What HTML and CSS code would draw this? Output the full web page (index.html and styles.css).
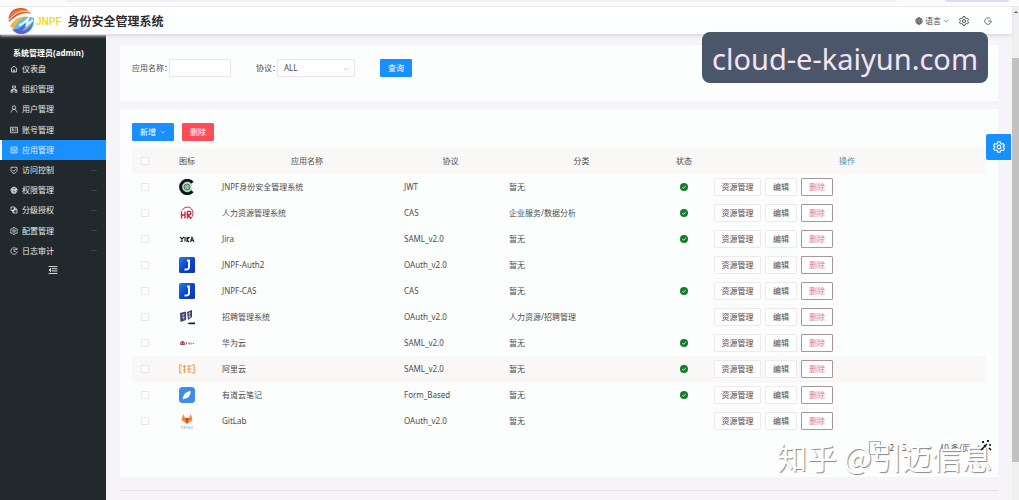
FILE: index.html
```html
<!DOCTYPE html>
<html lang="zh-CN">
<head>
<meta charset="utf-8">
<title>JNPF 身份安全管理系统</title>
<link rel="stylesheet" href="styles.css">
</head>
<body>
<svg class="defs" aria-hidden="true">
  <symbol id="i-home" viewBox="0 0 16 16"><path d="M1.500 8 8 2l6.500 6M3 7v7h10V7M6.500 14v-4h3v4"/></symbol>
  <symbol id="i-org" viewBox="0 0 16 16"><path d="M5 2h6v4H5zM8 6v3M3.500 12V9h9v3M2 11h4v3.500H2zM10 11h4v3.500h-4z"/></symbol>
  <symbol id="i-user" viewBox="0 0 16 16"><circle cx="8" cy="5" r="3.500"/><path d="M2 15c.5-8 11.500-8 12 0"/></symbol>
  <symbol id="i-card" viewBox="0 0 16 16"><path d="M1 2.500h14v11H1zM3.500 11c0-3 4-3 4 0M9.500 6h3.500M9.500 9.500h3.500"/><circle cx="5.500" cy="6.500" r="1.500"/></symbol>
  <symbol id="i-app" viewBox="0 0 16 16"><path d="M2 2h12v12H2zM2 6h12M6 6v8M8.500 9h3M8.500 11.500h3"/></symbol>
  <symbol id="i-shield" viewBox="0 0 16 16"><path d="M2 2.500h12V9c0 3-3 4.500-6 6-3-1.500-6-3-6-6zM5 8l2.500 2.500L11.500 6"/></symbol>
  <symbol id="i-bank" viewBox="0 0 16 16"><path d="M1.500 7 8 2l6.500 5zM3 9.500h10M5 7v6M8 4v10M11 7v6M4 14h8"/><circle cx="8" cy="8.500" r="6"/></symbol>
  <symbol id="i-copy" viewBox="0 0 16 16"><path d="M2 2h7v7H2zM6.500 6.500H14V14H6.500zM5 9v3h4M9 4h3v5"/></symbol>
  <symbol id="i-gear" viewBox="0 0 16 16"><path d="M6.500 1h3l.6 2.200 1.500.9 2.200-.6 1.500 2.600L13.700 7.700v.8l1.600 1.500-1.500 2.600-2.200-.6-1.500.9L9.500 15h-3l-.6-2.100-1.500-.9-2.200.6L.7 10l1.600-1.500v-.8L.7 6.100l1.500-2.600 2.200.6 1.500-.9z"/><circle cx="8" cy="8" r="2.500"/></symbol>
  <symbol id="i-clock" viewBox="0 0 16 16"><path d="M13.500 4.500A6.500 6.500 0 1 0 14.500 9M8 4v4.500h4M14 1.500v3.500h-3.500"/></symbol>
  <symbol id="i-fold" viewBox="0 0 16 16"><path d="M1 2.500h14M6 6h9M6 9.500h9M1 13.500h14M4 5.500 1.500 8 4 10.500z"/></symbol>
  <symbol id="i-down" viewBox="0 0 16 16"><path d="m2 5 6 6 6-6"/></symbol>
  <symbol id="i-globe" viewBox="0 0 16 16"><circle cx="8" cy="8" r="6.500"/><path d="M1.500 6h13M1.500 10h13M8 1.500v13"/><ellipse cx="8" cy="8" rx="3" ry="6.500"/></symbol>
  <symbol id="i-exit" viewBox="0 0 16 16"><path d="M13 4a6.500 6.500 0 1 0 1.500 4H8"/></symbol>
  <symbol id="i-ok" viewBox="0 0 16 16"><circle cx="8" cy="8" r="8" fill="#107c2b" stroke="none"/><path d="m4.500 8 2.500 2.800L11.500 5.500" stroke="#fff"/></symbol>
  <symbol id="i-j" viewBox="0 0 16 16"><linearGradient id="gj" x1="0" y1="0" x2="1" y2="1"><stop offset="0" stop-color="#2b7bea"/><stop offset=".5" stop-color="#0b45cf"/><stop offset="1" stop-color="#0c38a8"/></linearGradient><rect width="16" height="16" rx="1.500" fill="url(#gj)" stroke="none"/><path d="M8 3.500h2V10c0 2.200-1.500 2.800-4.500 2.500" stroke="#fff" stroke-width="2"/></symbol>
</svg>

<div class="browser-strip"><span class="address"></span><span class="profile"></span></div>
<div class="viewport">
  <div class="page">
    <header class="topbar">
      <a class="brand" href="#">
        <svg class="logo" viewBox="0 0 27 27" aria-hidden="true">
          <path d="M1 15C-1 6 6 0 14 1c4 0 7 3 9 6-7-3-14 1-22 8z" fill="#e4572b"/>
          <path d="M1 13C6 6 14 3 21 5M3 18c4-7 10-12 21-10" fill="none" stroke="#fff" stroke-width="1"/>
          <path d="M2 9C7 4 13 2 20 4" fill="none" stroke="#f5a33b" stroke-width="1"/>
          <path d="M2 19C7 11 14 7 25 11c-7-1-15 4-18 12z" fill="#f6b33e"/>
          <path d="M6 22C10 12 17 8 26 11c1 9-4 15-11 16-4 0-7-2-9-5z" fill="#65bde4"/>
          <path d="M4 22c6 1 10-2 13-6 1 3 0 5-3 8 5-1 8-4 11-9-1 7-5 12-12 12-4 0-7-2-9-5z" fill="#5965d1"/>
          <path d="M11 18c3 0 6-3 9-6l-1 6 6-5" fill="none" stroke="#e8f8fc" stroke-width="2"/>
        </svg>
        <span class="brand-code">JNPF</span>
        <span class="brand-name">身份安全管理系统</span>
      </a>
      <div class="tools">
        <button class="tool"><svg class="ico"><use href="#i-globe"/></svg>语言<svg class="ico tiny"><use href="#i-down"/></svg></button>
        <button class="tool" aria-label="设置"><svg class="ico mid"><use href="#i-gear"/></svg></button>
        <button class="tool" aria-label="退出"><svg class="ico"><use href="#i-exit"/></svg></button>
      </div>
    </header>
    <div class="body">
      <nav class="sidebar">
        <div class="admin">系统管理员(admin)</div>
        <div class="menu">
          <a href="#"><svg class="ico"><use href="#i-home"/></svg>仪表盘</a>
          <a href="#"><svg class="ico"><use href="#i-org"/></svg>组织管理</a>
          <a href="#"><svg class="ico"><use href="#i-user"/></svg>用户管理</a>
          <a href="#"><svg class="ico"><use href="#i-card"/></svg>账号管理</a>
          <a href="#" class="active"><svg class="ico"><use href="#i-app"/></svg>应用管理</a>
          <a href="#" class="sub"><svg class="ico"><use href="#i-shield"/></svg>访问控制</a>
          <a href="#" class="sub"><svg class="ico"><use href="#i-bank"/></svg>权限管理</a>
          <a href="#" class="sub"><svg class="ico"><use href="#i-copy"/></svg>分级授权</a>
          <a href="#" class="sub"><svg class="ico"><use href="#i-gear"/></svg>配置管理</a>
          <a href="#" class="sub"><svg class="ico"><use href="#i-clock"/></svg>日志审计</a>
        </div>
        <button class="fold" aria-label="收起菜单"><svg class="ico mid"><use href="#i-fold"/></svg></button>
      </nav>
      <main class="content">
        <form class="card search">
          <label for="app-name">应用名称：</label>
          <input id="app-name" class="field" type="text">
          <label class="second" for="protocol">协议：</label>
          <span class="select-box">
            <select id="protocol" class="field"><option>ALL</option></select>
            <svg class="ico tiny"><use href="#i-down"/></svg>
          </span>
          <button class="btn primary query" type="button">查询</button>
        </form>
        <section class="card list">
          <div class="actions">
            <button class="btn primary add">新增<svg class="ico tiny"><use href="#i-down"/></svg></button>
            <button class="btn danger">删除</button>
          </div>
          <table>
            <colgroup><col class="c-check"><col class="c-icon"><col class="c-name"><col class="c-proto"><col class="c-type"><col class="c-state"><col></colgroup>
            <thead>
              <tr><th><input type="checkbox" aria-label="全选"></th><th>图标</th><th>应用名称</th><th>协议</th><th>分类</th><th>状态</th><th class="op-head">操作</th></tr>
            </thead>
            <tbody>
              <tr><td class="mid-cell"><input type="checkbox" aria-label="选择"></td><td class="mid-cell"><svg class="app" viewBox="0 0 16 16"><circle cx="8" cy="8" r="5.500" fill="#b9dccb" stroke="none"/><path d="M13.500 3.800A6.700 6.700 0 1 0 13.500 12.200" stroke="#0b1718" stroke-width="3"/><circle cx="8" cy="8" r="3" fill="#8ac08c" stroke="#55756f" stroke-width="1"/><path d="M12 8h4" stroke="#fff" stroke-width="2"/></svg></td><td>JNPF身份安全管理系统</td><td>JWT</td><td>暂无</td><td class="mid-cell"><svg class="ico state"><use href="#i-ok"/></svg></td><td><div class="ops"><button class="btn">资源管理</button><button class="btn">编辑</button><button class="btn remove">删除</button></div></td></tr>
              <tr><td class="mid-cell"><input type="checkbox" aria-label="选择"></td><td class="mid-cell"><svg class="app" viewBox="0 0 16 16"><path d="M3 5.500C6 0 14 1.500 14 8c0 3-1.500 5-3 6" stroke="#b23a4d" stroke-width="1"/><path d="M2.500 6.500v7M6 6.500v7M2.500 10H6M8.500 13.500v-7c4.500-1 4.500 3.500 0 3.500l3.500 3.500" stroke="#bd2940" stroke-width="1.400"/></svg></td><td>人力资源管理系统</td><td>CAS</td><td>企业服务/数据分析</td><td class="mid-cell"><svg class="ico state"><use href="#i-ok"/></svg></td><td><div class="ops"><button class="btn">资源管理</button><button class="btn">编辑</button><button class="btn remove">删除</button></div></td></tr>
              <tr><td class="mid-cell"><input type="checkbox" aria-label="选择"></td><td class="mid-cell"><svg class="app" viewBox="0 0 16 16"><path d="m1 6 2 2 2-2M3 8v3M1.500 10.500h2M6 6v4.500M8 11V6.500h2L8 9l2 2M11.500 11l1.500-4.500 2 4.500M12 9.500h2" stroke="#27293a" stroke-width="1.200"/></svg></td><td>Jira</td><td>SAML_v2.0</td><td>暂无</td><td class="mid-cell"><svg class="ico state"><use href="#i-ok"/></svg></td><td><div class="ops"><button class="btn">资源管理</button><button class="btn">编辑</button><button class="btn remove">删除</button></div></td></tr>
              <tr><td class="mid-cell"><input type="checkbox" aria-label="选择"></td><td class="mid-cell"><svg class="app"><use href="#i-j"/></svg></td><td>JNPF-Auth2</td><td>OAuth_v2.0</td><td>暂无</td><td></td><td><div class="ops"><button class="btn">资源管理</button><button class="btn">编辑</button><button class="btn remove">删除</button></div></td></tr>
              <tr><td class="mid-cell"><input type="checkbox" aria-label="选择"></td><td class="mid-cell"><svg class="app"><use href="#i-j"/></svg></td><td>JNPF-CAS</td><td>CAS</td><td>暂无</td><td class="mid-cell"><svg class="ico state"><use href="#i-ok"/></svg></td><td><div class="ops"><button class="btn">资源管理</button><button class="btn">编辑</button><button class="btn remove">删除</button></div></td></tr>
              <tr><td class="mid-cell"><input type="checkbox" aria-label="选择"></td><td class="mid-cell"><svg class="app" viewBox="0 0 16 16"><path d="m1 4 6-1.500V11l-5.500 2zM8 3l5-2v7l-4 3z" fill="#3a3c70" stroke="none"/><path d="m2.500 6 3.500-1M2.500 9 6 8M4 5l1 6M9 5l3-1M9 8l3-1M10.500 3v6" stroke="#d9dbf0" stroke-width=".6"/><path d="M8 14.500 11 13.500h5v1.800h-5z" fill="#20202c" stroke="none"/></svg></td><td>招聘管理系统</td><td>OAuth_v2.0</td><td>人力资源/招聘管理</td><td></td><td><div class="ops"><button class="btn">资源管理</button><button class="btn">编辑</button><button class="btn remove">删除</button></div></td></tr>
              <tr><td class="mid-cell"><input type="checkbox" aria-label="选择"></td><td class="mid-cell"><svg class="app" viewBox="0 0 16 16"><path d="M1.500 9.500C1 5.500 6 5.500 5.800 9.500zM3.700 6v3.500" fill="#d98794" stroke="#8e3347" stroke-width=".8"/><path d="M7.500 7v2.500M9 8h1.500v1.500M12 7.500v2M13.500 8.500h1.500" stroke="#8c7983" stroke-width="1"/></svg></td><td>华为云</td><td>SAML_v2.0</td><td>暂无</td><td class="mid-cell"><svg class="ico state"><use href="#i-ok"/></svg></td><td><div class="ops"><button class="btn">资源管理</button><button class="btn">编辑</button><button class="btn remove">删除</button></div></td></tr>
              <tr class="hover"><td class="mid-cell"><input type="checkbox" aria-label="选择"></td><td class="mid-cell"><svg class="app" viewBox="0 0 16 16"><path d="M3 4H.8v8H3M13 4h2.200v8H13M3.500 5.500H7M5.500 4v8M4 9h3M8 5h4.500M8 8h4.500M10 4v7.500M8 11h4.500" stroke="#e9a25c" stroke-width="1.200"/></svg></td><td>阿里云</td><td>SAML_v2.0</td><td>暂无</td><td class="mid-cell"><svg class="ico state"><use href="#i-ok"/></svg></td><td><div class="ops"><button class="btn">资源管理</button><button class="btn">编辑</button><button class="btn remove">删除</button></div></td></tr>
              <tr><td class="mid-cell"><input type="checkbox" aria-label="选择"></td><td class="mid-cell"><svg class="app" viewBox="0 0 16 16"><rect width="16" height="16" rx="3.500" fill="#3f8ce6" stroke="none"/><path d="M4 12.500C3.500 8 7 4.500 11.500 4c.5 3.500-2 8-5.500 7.500z" fill="#fff" stroke="none"/></svg></td><td>有道云笔记</td><td>Form_Based</td><td>暂无</td><td class="mid-cell"><svg class="ico state"><use href="#i-ok"/></svg></td><td><div class="ops"><button class="btn">资源管理</button><button class="btn">编辑</button><button class="btn remove">删除</button></div></td></tr>
              <tr><td class="mid-cell"><input type="checkbox" aria-label="选择"></td><td class="mid-cell"><svg class="app" viewBox="0 0 16 16"><path d="m3 5 1.500-4L6 5h4l1.500-4L13 5l.5 2L8 11 2.500 7z" fill="#f08a35" stroke="none"/><path d="M6 5h4l-2 6z" fill="#d9412b" stroke="none"/><path d="M2 13.500h2M5.500 13v2M7 13.500h1.500M10 13v2M12 14h2M2 15h12" stroke="#b9b9bd" stroke-width=".8"/></svg></td><td>GitLab</td><td>OAuth_v2.0</td><td>暂无</td><td></td><td><div class="ops"><button class="btn">资源管理</button><button class="btn">编辑</button><button class="btn remove">删除</button></div></td></tr>
            </tbody>
          </table>
          <nav class="pager" aria-label="分页">
            <a class="current" href="#">1</a><a href="#">2</a><a href="#">3</a><a href="#">&lt;</a><a href="#">&gt;</a><span class="size">10 条/页</span>
          </nav>
        </section>
        <footer class="foot"></footer>
        <button class="drawer" aria-label="页面设置"><svg class="ico large"><use href="#i-gear"/></svg></button>
      </main>
    </div>
  </div>
  <div class="scroll"><span class="arrow"></span><span class="thumb"></span></div>
</div>
<div class="domain">cloud-e-kaiyun.com</div>
<div class="watermark">知乎 @引迈信息</div>
<svg class="wand" viewBox="0 0 12 12" aria-hidden="true"><path d="m1 11 6-6M3 2v2M2 3h2M8 1v2M7 2h2M10 5v2M9 9l2 2M4 6l2 2"/></svg>
</body>
</html>
```
FILE: styles.css
```css
* { box-sizing: border-box; }
body {
  margin: 0;
  height: 100vh;
  display: flex;
  flex-direction: column;
  position: relative;
  overflow: hidden;
  background: #f6f4f8;
  color: #4c4c4e;
  font: 8px/12px "Noto Sans", "Noto Sans CJK SC", sans-serif;
}
button, input, select { font: inherit; color: inherit; margin: 0; }
button { border: 0; background: none; padding: 0; }
a { color: inherit; text-decoration: none; }
.defs { position: absolute; width: 0; height: 0; }
.ico { width: 8px; height: 8px; flex: none; }
.ico, .app, .wand { fill: none; stroke: currentColor; stroke-width: 1.500; }
.tiny { width: 6px; height: 6px; }
.mid { width: 10px; height: 10px; }
.large { width: 12px; height: 12px; }

.browser-strip { display: flex; justify-content: space-between; height: 7px; padding: 0 10px 0 65px; background: #fcfcfd; border-bottom: 1px solid #eeeef2; }
.address { flex: 1; height: 2px; margin-right: 48px; background: #f0eff2; border-radius: 0 0 4px 4px; }
.profile { width: 64px; height: 2px; background: #ded9f8; border-radius: 0 0 4px 4px; }
.viewport { flex: 1; display: flex; min-height: 0; }
.page { flex: 1; display: flex; flex-direction: column; min-width: 0; }
.topbar { display: flex; align-items: center; justify-content: space-between; height: 28px; padding: 0 20px 0 8px; background: #fdfefe; border-bottom: 1px solid #e2dfe4; box-shadow: 0 1px 3px #dcdae0; z-index: 1; }
.brand { display: flex; align-items: center; }
.logo { width: 27px; height: 27px; }
.brand-code, .brand-name { padding-top: 3px; }
.brand-code { color: #f0db35; font: bold 10px/12px "Liberation Sans", sans-serif; margin: 0 6px 0 1px; }
.brand-name { color: #2c2a2c; font-size: 12px; font-weight: bold; line-height: 16px; }
.tools { display: flex; align-items: center; gap: 10px; }
.tool { display: flex; align-items: center; gap: 2px; color: #434347; }
.tool + .tool + .tool { margin-left: 5px; }

.body { flex: 1; display: flex; min-height: 0; }
.sidebar { flex: none; width: 106px; background: #22292c; color: #e6e8e9; padding-top: 12px; }
.admin { padding-left: 13px; font-weight: bold; color: #fff; }
.menu { display: grid; grid-auto-rows: 1fr; height: 202px; }
.menu a { display: flex; align-items: center; gap: 4px; padding-left: 10px; }
.menu .active { background: #1890ff; border-left: 2px solid #fff; padding-left: 8px; }
.menu .sub::after { content: ""; width: 6px; height: 1px; margin: 0 9px 0 auto; background: #3d4548; }
.fold { display: block; margin: 4px 0 0 48px; }

.content { flex: 1; min-width: 0; position: relative; display: flex; flex-direction: column; padding: 10px 14px 0; }
.card { background: #fcfefe; }
.search { display: flex; align-items: flex-start; padding: 14px 12px 24px; }
.search label { line-height: 18px; }
.field { height: 18px; border: 1px solid #eae4ea; border-radius: 1px; background: #fff; padding: 0 6px; outline: 0; }
#app-name { width: 62px; }
#app-name, .select-box { margin-left: -3px; }
.second { margin-left: 25px; }
.select-box { position: relative; display: flex; }
.select-box select { width: 78px; appearance: none; }
.select-box .ico { position: absolute; right: 6px; top: 7px; color: #aaa; }
.btn { display: inline-flex; align-items: center; justify-content: center; height: 18px; padding: 0 8px; border: 1px solid #efe8ed; border-radius: 1px; background: #fff; line-height: 16px; white-space: nowrap; }
.primary { background: #1890ff; border-color: #1890ff; color: #fff; }
.danger { background: #ff4d55; border-color: #ff4d55; color: #fff; }
.primary, .danger { width: 32px; padding: 0; }
.query { margin-left: 25px; }
.add { width: 42px; gap: 4px; }

.list { margin-top: 8px; padding: 14px 12px 20px; }
.actions { display: flex; gap: 8px; margin-bottom: 7px; }
table { width: 100%; table-layout: fixed; border-collapse: collapse; }
.c-check { width: 26px; }
.c-icon { width: 58px; }
.c-name { width: 182px; }
.c-proto { width: 105px; }
.c-type { width: 157px; }
.c-state { width: 48px; }
th, td { height: 26px; padding: 0 6px; text-align: left; vertical-align: middle; }
th { background: #faf8f7; font-weight: normal; text-align: center; }
.op-head { color: #4b91a8; }
.mid-cell { text-align: center; }
td { border-bottom: 1px solid #f9fafb; }
.hover td { background: #faf8f6; }
th input, td input { appearance: none; display: block; width: 8px; height: 8px; margin: 0 auto; border: 1px solid #ebe6ea; background: #fff; }
.app { display: block; width: 16px; height: 16px; margin: 0 auto; }
.state { display: block; margin: 0 auto; }
.ops { display: flex; gap: 4px; }
.ops .btn { width: 32px; padding: 0; }
.ops .btn:first-child { width: 47px; }
.ops .remove { color: #e2778a; border-color: #a79599; }
.pager { display: flex; align-items: center; justify-content: flex-end; gap: 8px; height: 18px; margin-top: 4px; padding-right: 16px; }
.pager .current { border: 1px solid #8fb7d0; color: #4b91b8; padding: 0 3px; }
.foot { margin: 13px 0 0; border-top: 1px solid #e2e4e6; }
.drawer { position: absolute; right: 1px; top: 99px; width: 25px; height: 26px; display: flex; align-items: center; justify-content: center; background: #1890ff; color: #fff; border-radius: 2px 0 0 2px; }

.scroll { width: 7px; flex: none; display: flex; flex-direction: column; background: #f0f0f1; }
.arrow { height: 0; margin: 4px auto 45px; border: 2px solid transparent; border-bottom-color: #555; border-top: 0; }
.thumb { height: 82%; background: #c2c1c2; }

.domain { position: absolute; right: 31px; top: 32px; padding: 3px 10px 0; border-radius: 8px; background: #4c566b; color: #f1e5f3; font: 29px/48px "Noto Sans", sans-serif; z-index: 2; }
.watermark { position: absolute; right: 27px; bottom: 24px; color: #fff; font: 30px/40px "Noto Sans CJK SC", sans-serif; text-shadow: 1px 1px 1px #88888c; z-index: 2; }
.wand { position: absolute; right: 27px; bottom: 49px; width: 12px; height: 12px; color: #111; z-index: 3; }
```
